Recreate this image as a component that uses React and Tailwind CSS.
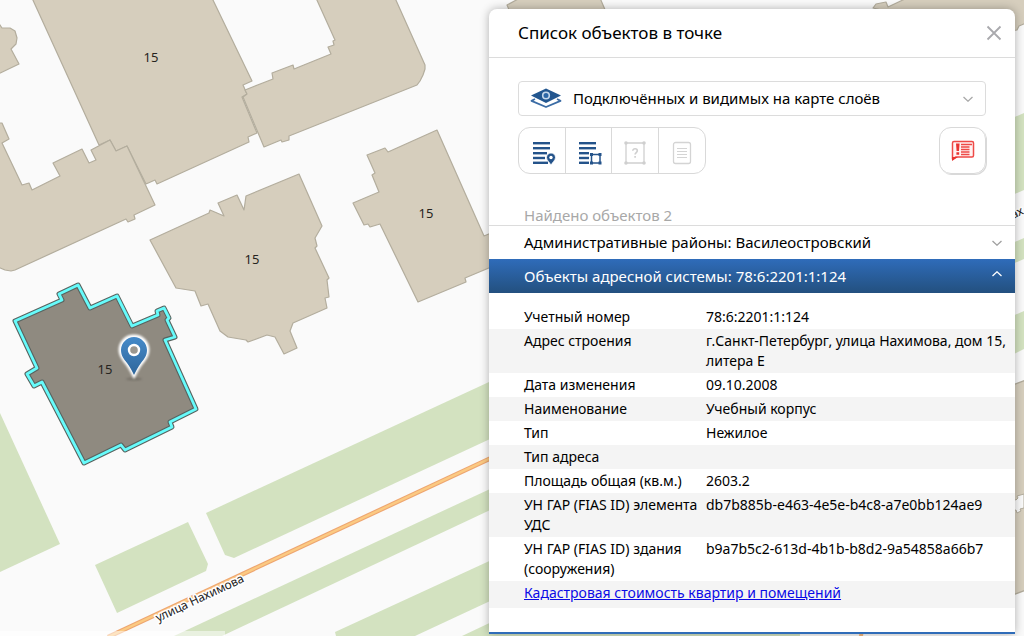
const buildings = [
  // north-west block
  '32,-2 99,145 110,140 116,151 127,146 146,184 155,180 157,184 249,142 248,137 257,133 242,97 247,94 243,85 252,81 212,-2',
  '-2,123 2,123 9,139 2,143 22,185 29,183 32,190 60,176 53,163 82,149 89,163 96,160 91,150 110,140 116,151 127,146 155,205 134,215 135,219 128,222 126,219 15,270 11,271 5,270 -2,267',
  '-2,22 2,28 10,28 15,31 17,38 16,44 11,49 19,64 -2,74',
  '316,-2 335,40 333,41 334,45 328,47 331,54 294,69 293,65 272,73 273,79 245,90 247,94 243,97 264,147 281,140 282,142 289,140 289,136 417,85 420,81 423,75 425,69 425,65 395,-2',
  // central buildings
  '150,240 209,213 210,210 224,216 218,203 237,195 244,210 246,196 299,174 322,226 315,238 317,246 315,248 329,278 327,280 329,297 325,298 327,308 293,323 290,331 297,348 284,354 275,337 267,335 248,342 246,340 228,337 220,331 208,304 201,306 195,291 176,288',
  '437,130 484,236 510,225 510,259 465,278 466,282 418,302 380,224 370,227 368,224 364,225 353,203 379,192 372,175 375,173 367,155 385,148 388,152',
  // east side, mostly under the panel
  '507,5 520,-2 600,-2 606,12 510,12',
  '873,8 876,4 886,2 888,7 907,-2 1026,-2 1026,23 1019,26 1017,30 1010,31 890,12',
  '1010,386 1026,380 1026,590 1010,596',
];

const lawns = [
  '0,413 60,544 0,572',
  '95,565 188,522 208,564 206,571 117,613',
  '206,513 489,382 520,368 520,425 234,558 225,555',
  '174,636 520,475 520,496 222,636',
  '335,632 520,547 520,587 415,636 336,636',
  '462,636 500,618 800,618 800,636',
  '1010,119 1024,113 1024,190 1010,196',
  '1010,244 1024,238 1024,259 1010,265',
  '1010,317 1024,311 1024,349 1010,356',
];

const selected =
  '15,321 62,300 59,294 78,285 90,308 117,296 132,326 158,315 157,311 164,308 169,318 167,320 175,337 165,340 196,409 170,422 172,427 125,450 121,445 84,463 42,382 34,386 27,374 37,368';

const attributes = [
  ['Учетный номер', '78:6:2201:1:124'],
  ['Адрес строения', 'г.Санкт-Петербург, улица Нахимова, дом 15, литера Е'],
  ['Дата изменения', '09.10.2008'],
  ['Наименование', 'Учебный корпус'],
  ['Тип', 'Нежилое'],
  ['Тип адреса', ''],
  ['Площадь общая (кв.м.)', '2603.2'],
  ['УН ГАР (FIAS ID) элемента УДС', 'db7b885b-e463-4e5e-b4c8-a7e0bb124ae9'],
  ['УН ГАР (FIAS ID) здания (сооружения)', 'b9a7b5c2-613d-4b1b-b8d2-9a54858a66b7'],
];

const houseNumbers = [
  [151, 62],
  [252, 264],
  [426, 218],
  [105, 374],
];

function MapCanvas() {
  return (
    <svg className="absolute inset-0 h-full w-full" viewBox="0 0 1024 636" preserveAspectRatio="xMinYMin slice" aria-hidden="true">
      <defs>
        <linearGradient id="pin" x1="0" y1="0" x2="0" y2="1">
          <stop offset="0" stopColor="#458ac9" />
          <stop offset="1" stopColor="#2f669b" />
        </linearGradient>
        <filter id="glow" x="-50%" y="-50%" width="200%" height="200%">
          <feGaussianBlur stdDeviation="1.2" />
        </filter>
      </defs>
      <rect width="1024" height="636" fill="#fafafa" />
      {lawns.map((p) => <polygon key={p} points={p} fill="#d3e2c0" />)}
      {buildings.map((p) => (
        <polygon key={p} points={p} fill="#d6cebd" stroke="#b3ad9d" strokeWidth="1.2" strokeLinejoin="round" />
      ))}
      <path d="M1010 498l6 2 2-2-1-2 7-2v14l-4 1 1 2-4 2-1-3-6 1z" fill="#fafafa" stroke="#b3ad9d" />

      {/* road */}
      <path d="M108 637L520 444.500" stroke="#eea671" strokeWidth="4.600" />
      <path d="M108 637L520 444.500" stroke="#fbca82" strokeWidth="2.400" />
      <path d="M859 636l1-6h4l-1 6z" fill="#f3b67c" />
      <rect y="631" width="225" height="5" fill="#fff" opacity=".5" />

      {/* selected building */}
      <polygon points={selected} fill="#8f8a80" stroke="#57635f" strokeWidth="5" strokeLinejoin="round" />
      <polygon points={selected} fill="none" stroke="#66fbfb" strokeWidth="2.800" strokeLinejoin="round" />

      <g fontFamily='"Noto Sans", sans-serif' fontSize="13" fill="#262420" textAnchor="middle">
        {houseNumbers.map(([x, y]) => <text key={x} x={x} y={y}>15</text>)}
      </g>
      <g fontFamily='"Noto Sans", sans-serif' fontSize="12" fill="#222" stroke="#fff" strokeWidth="3" strokeLinejoin="round" paintOrder="stroke">
        <text transform="translate(158 622) rotate(-25)">улица Нахимова</text>
        <text transform="translate(1013 219) rotate(-25)">ах</text>
      </g>

      {/* marker */}
      <ellipse cx="134" cy="379" rx="8" ry="1.500" fill="#5d5950" filter="url(#glow)" opacity=".5" />
      <path d="M134 336c-8 0-14 6-14 14 0 7 4 10 7 14 3 4 5 8 7 12 2-4 4-8 7-12 3-4 7-7 7-14 0-8-6-14-14-14z" fill="#fff" stroke="#fff" strokeWidth="3" filter="url(#glow)" />
      <path fill="url(#pin)" d="M134 337c-7 0-13 6-13 13 0 6 3 9 6 13 3 4 5 8 7 12 2-4 4-8 7-12 3-4 6-7 6-13 0-7-6-13-13-13z" />
      <circle cx="134" cy="350" r="5" fill="#9b978f" stroke="#fff" strokeWidth="2.400" />
    </svg>
  );
}

function LayersIcon() {
  return (
    <svg className="h-6 w-8 shrink-0" viewBox="0 0 32 24" aria-hidden="true">
      <path d="M5 12l-3.500 1.800L16 20l14.500-6.200L27 12" fill="none" stroke="#3b6ca5" strokeWidth="1.800" strokeLinejoin="round" />
      <path d="M16 1.500L31 8.500 16 16 1 8.500z" fill="#22568f" />
      <circle cx="16" cy="8.500" r="3.300" fill="#2c66a6" stroke="#c4d7eb" strokeWidth="1.600" />
    </svg>
  );
}

// text lines shared by the two "list" tools
function Lines() {
  return (
    <g fill="#24538a">
      <rect x="1" y="1" width="17" height="2.400" />
      <rect x="1" y="6" width="17" height="2.400" />
      <rect x="1" y="11" width="14" height="2.400" />
      <rect x="1" y="15.800" width="12" height="2.400" />
      <rect x="1" y="20.600" width="15" height="2.400" />
    </g>
  );
}

function ListPinIcon() {
  return (
    <svg className="h-6 w-6" viewBox="0 0 24 24" aria-hidden="true">
      <Lines />
      <path d="M19 24.500c-1-3-4.500-5-4.500-8a4.500 4.500 0 0 1 9 0c0 3-3.500 5-4.500 8z" fill="#24538a" stroke="#fff" strokeWidth=".8" />
      <circle cx="19" cy="16.500" r="1.700" fill="#fff" />
    </svg>
  );
}

function ListAreaIcon() {
  return (
    <svg className="h-6 w-6" viewBox="0 0 24 24" aria-hidden="true">
      <Lines />
      <rect x="11" y="11" width="13" height="13" fill="#fff" />
      <rect x="13.500" y="13.500" width="8.500" height="8.500" fill="none" stroke="#24538a" strokeWidth="1.500" />
      <path fill="#24538a" d="M12 12h3v3h-3zM20.500 12h3v3h-3zM12 20.500h3v3h-3zM20.500 20.500h3v3h-3z" />
    </svg>
  );
}

function UnknownAreaIcon() {
  return (
    <svg className="h-6 w-6" viewBox="0 0 24 24" aria-hidden="true">
      <path d="M3 2h18v20H3z" fill="none" stroke="#cfcfcf" strokeWidth="1.300" />
      <g fill="#cfcfcf">
        <circle cx="3" cy="2" r="1.800" /><circle cx="21" cy="2" r="1.800" />
        <circle cx="3" cy="22" r="1.800" /><circle cx="21" cy="22" r="1.800" />
      </g>
      <path d="M9.800 9.800c0-1.300 1-2.100 2.300-2.100s2.200.8 2.200 2c0 1.800-2.200 1.900-2.200 3.800M12.100 15v1.700" fill="none" stroke="#cfcfcf" strokeWidth="1.600" />
    </svg>
  );
}

function DocumentIcon() {
  return (
    <svg className="h-6 w-6" viewBox="0 0 24 24" aria-hidden="true">
      <rect x="3.500" y="1.500" width="17" height="21" rx="2" fill="none" stroke="#d4d4d4" strokeWidth="1.300" />
      <path d="M7 7.500h10M7 10.500h10M7 13.500h10M7 16.500h10" stroke="#d4d4d4" strokeWidth="1.200" />
    </svg>
  );
}

function ReportIcon() {
  return (
    <svg className="h-6 w-6" viewBox="0 0 24 24" aria-hidden="true">
      <path d="M1.500 20V4Q1.500 2.500 3 2.500h18q1.500 0 1.500 1.500v12.500q0 1.500-1.500 1.500H5z" fill="#fff3f2" stroke="#ee4a47" strokeWidth="1.500" strokeLinejoin="round" />
      <path d="M1 18h6l-6 4z" fill="#e93330" />
      <path d="M5 4.500h3.600l-.6 7.500H5.600zM5.400 13.200h2.800v2.600H5.400z" fill="#e93330" />
      <path d="M10 5.500h11M10 8h8.500M10 10.500h8.500M10 13h8.500M10 15.500h8.500" stroke="#ee4a47" strokeWidth="1.500" />
    </svg>
  );
}

function Chevron({ className, up }) {
  return (
    <svg className={className} viewBox="0 0 10 6" fill="none" stroke="currentColor" strokeWidth="1.300" aria-hidden="true">
      <path d={up ? 'M.5 5L5 .8 9.500 5' : 'M.5 1L5 5.200 9.500 1'} />
    </svg>
  );
}

const tools = [
  { label: 'Объекты в точке', Icon: ListPinIcon },
  { label: 'Объекты в области', Icon: ListAreaIcon },
  { label: 'Неизвестная область', Icon: UnknownAreaIcon, disabled: true },
  { label: 'Документ', Icon: DocumentIcon, disabled: true },
];

function ObjectsPanel() {
  return (
    <section className="relative w-full max-w-[526px] self-start overflow-hidden rounded-t-lg border-b-2 border-[#2f6cb8] bg-white shadow-[0_0_10px_rgba(0,0,0,0.3)]">
      <header className="flex h-[49px] items-center justify-between border-b border-[#dcdcdc] pr-3 pl-[29px]">
        <h1 className="text-[17px]">Список объектов в точке</h1>
        <button type="button" aria-label="Закрыть" className="text-[#a9a9ad]">
          <svg className="h-4 w-[18px]" viewBox="0 0 18 16" fill="none" stroke="currentColor" strokeWidth="1.800">
            <path d="M2.500 1.500l13 13M15.500 1.500l-13 13" />
          </svg>
        </button>
      </header>

      <div className="px-[29px] pt-[23px]">
        <div className="relative flex h-[35px] items-center rounded border border-[#dcdcdc] pl-[11px]">
          <LayersIcon />
          <select aria-label="Слои" className="h-full flex-1 appearance-none bg-transparent pl-[11px] text-[15px] outline-none">
            <option>Подключённых и видимых на карте слоёв</option>
          </select>
          <Chevron className="pointer-events-none absolute right-3 h-[6px] w-[10px] text-[#a9a9a9]" />
        </div>

        <div className="mt-[11px] flex items-center justify-between">
          <div className="grid w-[188px] grid-cols-4 divide-x divide-[#d9d9d9] overflow-hidden rounded-xl border border-[#d9d9d9]">
            {tools.map(({ label, Icon, disabled }) => (
              <button
                key={label}
                type="button"
                aria-label={label}
                disabled={disabled}
                className="flex h-[45px] items-center justify-center pt-1 enabled:pl-1"
              >
                <Icon />
              </button>
            ))}
          </div>
          <button type="button" aria-label="Сообщить об ошибке" className="flex h-[47px] w-[47px] items-center justify-center rounded-xl border border-[#d9d9d9] shadow-[1px_1px_0_#d9d9d9]">
            <ReportIcon />
          </button>
        </div>
      </div>

      <p className="mt-[31px] border-b border-[#dcdcdc] pl-[35px] text-[15px] leading-5 text-[#a8a8a8]">Найдено объектов 2</p>

      <button type="button" aria-expanded="false" className="flex h-[33px] w-full items-center justify-between pr-[13px] pl-[35px] text-[15px]">
        Административные районы: Василеостровский
        <Chevron className="h-[6px] w-[10px] text-[#a0a0a0]" />
      </button>
      <button type="button" aria-expanded="true" className="flex h-[34px] w-full items-center justify-between bg-linear-to-b from-[#2f6cba] to-[#23507f] pr-[13px] pl-[35px] text-[15px] text-white">
        Объекты адресной системы: 78:6:2201:1:124
        <Chevron up className="mb-1 h-[6px] w-[10px]" />
      </button>

      <table className="mt-3 w-full table-fixed text-sm leading-5">
        <tbody>
          {attributes.map(([name, value]) => (
            <tr key={name} className="even:bg-[#f4f4f4]">
              <th scope="row" className="w-[217px] py-[2px] pr-2 pl-[35px] text-left align-top font-normal">{name}</th>
              <td className="py-[2px] pr-2 align-top">{value}</td>
            </tr>
          ))}
          <tr className="even:bg-[#f4f4f4]">
            <td colSpan={2} className="pt-[2px] pb-[5px] pl-[35px]">
              <a href="#cost" className="text-[#0b0be6] underline">Кадастровая стоимость квартир и помещений</a>
            </td>
          </tr>
        </tbody>
      </table>
      <div className="h-6" />
    </section>
  );
}

export default function App() {
  return (
    <main className="relative flex min-h-screen justify-end overflow-hidden pt-[9px] pr-[9px] font-['Noto_Sans',sans-serif] text-black">
      <MapCanvas />
      <ObjectsPanel />
    </main>
  );
}
